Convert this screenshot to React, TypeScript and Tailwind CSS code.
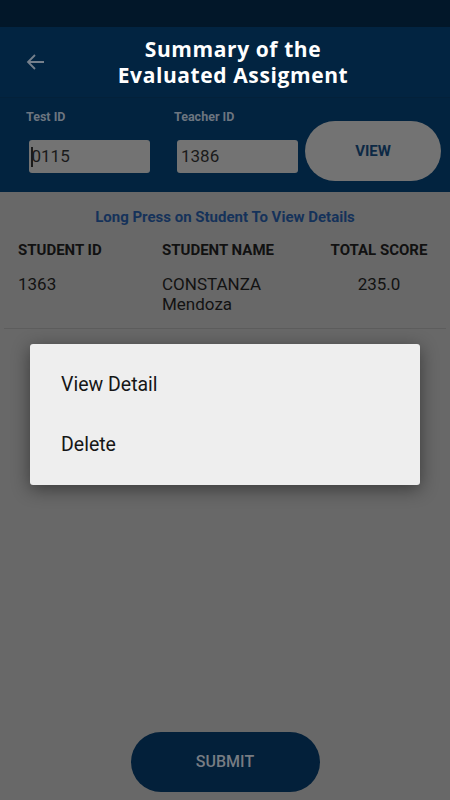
import React from "react";

export default function App() {
  return (
    <div className="relative flex h-[800px] w-[450px] flex-col overflow-hidden bg-[#686868] font-['Roboto',sans-serif]">
      <div className="h-[27px] bg-[#021729]" />
      <header className="flex h-[71px] items-center border-b border-[#03213a] bg-[#022441]">
        <div className="flex w-[68px] justify-center pl-1">
          <svg width="24" height="24" viewBox="0 0 24 24" fill="none" stroke="#76808c" strokeWidth="1.8">
            <path d="M20 12H4M11 5l-7 7 7 7" />
          </svg>
        </div>
        <h1 className="flex-1 pr-[52px] text-center font-['Open_Sans',sans-serif] text-[21px] font-bold leading-[26px] tracking-[0.6px] text-white">
          Summary of the
          <br />
          Evaluated Assigment
        </h1>
      </header>
      <section className="flex h-[94px] items-start bg-[#02233f] pl-[26px] pr-[9px] pt-[11px]">
        <div className="flex w-[148px] flex-col">
          <span className="text-[12.5px] font-bold leading-[16px] text-[#6c7580]">Test ID</span>
          <div className="mt-[15px] ml-[3px] flex h-[33px] w-[121px] items-center rounded-[3px] bg-[#737373] px-[2px] text-[17px] text-[#1a1a1a]">
            <span className="h-[20px] w-[1.5px] bg-[#1a1a1a]" />
            <span className="-ml-[1px]">0115</span>
          </div>
        </div>
        <div className="flex w-[131px] flex-col">
          <span className="text-[12.5px] font-bold leading-[16px] text-[#6c7580]">Teacher ID</span>
          <div className="mt-[15px] ml-[3px] flex h-[33px] w-[121px] items-center rounded-[3px] bg-[#737373] px-[4px] text-[17px] text-[#1a1a1a]">
            1386
          </div>
        </div>
        <button className="mt-[12px] flex h-[60px] flex-1 items-center justify-center rounded-full bg-[#737373] text-[15px] font-bold text-[#0d2945]">
          VIEW
        </button>
      </section>
      <main className="flex flex-1 flex-col">
        <p className="mt-[14px] text-center text-[15px] font-bold text-[#15325a]">
          Long Press on Student To View Details
        </p>
        <div className="mt-[10px] grid grid-cols-[144px_150px_1fr] pl-[18px] pr-[4px] text-[15px] font-bold text-[#111]">
          <span>STUDENT ID</span>
          <span>STUDENT NAME</span>
          <span className="text-center">TOTAL SCORE</span>
        </div>
        <div className="mt-[13px] grid grid-cols-[144px_150px_1fr] pl-[18px] pr-[4px] text-[17px] leading-[20px] text-[#121212]">
          <span>1363</span>
          <span>
            CONSTANZA
            <br />
            Mendoza
          </span>
          <span className="text-center">235.0</span>
        </div>
        <div className="mx-[4px] mt-[14px] border-b border-[#5d5d5d]" />
        <div className="mt-auto mb-[8px] flex justify-center">
          <button className="h-[60px] w-[189px] rounded-full bg-[#03203a] text-[16px] font-medium text-[#777c83]">
            SUBMIT
          </button>
        </div>
      </main>
      <div className="absolute left-[30px] top-[344px] flex h-[141px] w-[390px] flex-col justify-center rounded-[3px] bg-[#eeeeee] pl-[31px] text-[19.5px] text-[#161616] shadow-[0_4px_18px_rgba(0,0,0,0.45)]">
        <span className="leading-[60px]">View Detail</span>
        <span className="leading-[60px]">Delete</span>
      </div>
    </div>
  );
}
